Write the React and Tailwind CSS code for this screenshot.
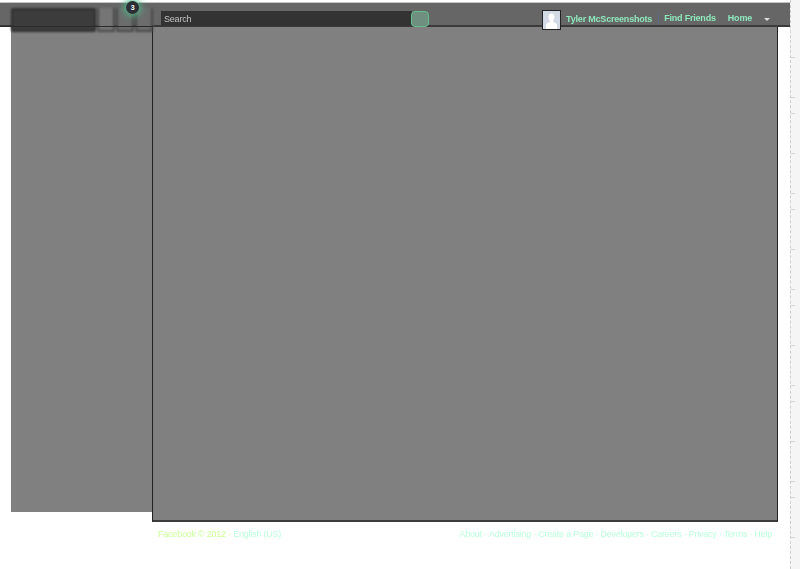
const links = ['About', 'Advertising', 'Create a Page', 'Developers', 'Careers', 'Privacy', 'Terms', 'Help'];
const ticks = [57, 97, 113, 153, 193, 209, 249, 289, 305, 345, 385, 401, 441, 481, 497, 537];

const Header = () => (
  <div className="relative h-[24px] w-[790px] bg-[#666666] border-b-2 border-[#3a3a3a] flex items-center text-[9px] tracking-[-0.2px] font-bold text-[#8ee8bd]">
    <div className="absolute left-[11px] top-[5px] w-[85px] h-[24px] rounded-[2px] bg-[#3c3c3c] border-2 border-[#303030] blur-[0.8px]" />
    <div className="absolute left-[97px] top-[5px] w-[18px] h-[24px] rounded-[2px] bg-[#757575] border-x-2 border-b-2 border-[#484848] blur-[0.8px]" />
    <div className="absolute left-[116px] top-[5px] w-[18px] h-[24px] rounded-[2px] bg-[#6c6c6c] border-x-2 border-b-2 border-[#484848] blur-[0.8px]" />
    <div className="absolute left-[135px] top-[5px] w-[18px] h-[24px] rounded-[2px] bg-[#6c6c6c] border-x-2 border-b-2 border-[#484848] blur-[0.8px]" />
    <div className="absolute left-0 top-[23px] w-[153px] h-px bg-[#2a2a2a]" />
    <div className="absolute left-[126px] top-[-2px] w-[13px] h-[13px] rounded-full bg-[#2b2f33] text-white text-[7px] leading-[13px] text-center shadow-[0_0_7px_2px_#4fb98a]">3</div>

    <div className="absolute left-[161px] top-[8px] w-[251px] h-[15px] pl-[3px] bg-[#333333] text-[#c4c4c4] font-normal leading-[17px] blur-[0.3px]">Search</div>
    <div className="absolute left-[411px] top-[8px] w-[18px] h-[16px] rounded-[4px] bg-[#6f8f80] border border-[#62c08f] blur-[0.6px]" />

    <div className="absolute left-[542px] top-[7px] w-[19px] h-[20px] bg-[#d4d9e6] border border-[#222222] flex items-end justify-center overflow-hidden">
      <svg viewBox="0 0 17 18" className="w-[17px] h-[18px]">
        <path d="M8.5 2.5c2 0 3.1 1.6 3 3.6-.1 1.6-.8 3-1.4 3.6v1.2c1.5.7 3.4 1.4 3.9 2.6V18H3v-4.5c.5-1.2 2.4-1.9 3.9-2.6V9.7c-.6-.6-1.3-2-1.4-3.6-.1-2 1-3.6 3-3.6z" fill="#ffffff" />
      </svg>
    </div>
    <div className="ml-auto mr-[20px] mt-[10px] flex items-center blur-[0.3px]">
      <span className="pr-[6px] border-r border-[#5a6b8a] leading-[12px]">Tyler McScreenshots</span>
      <span className="ml-[5px]">Find Friends</span>
      <span className="ml-[12px]">Home</span>
      <span className="ml-[12px] mt-[1px] w-0 h-0 border-x-[3.5px] border-x-transparent border-t-[3px] border-t-[#dddddd]" />
    </div>
  </div>
);

const Gutter = () => (
  <div className="relative w-[10px] h-full bg-[#f5f5f5] border-l border-dashed border-[#cfcfcf]">
    {ticks.map(t => (
      <div key={t} className="absolute left-0 w-[4px] h-px bg-[#d4d4d4]" style={{ top: t }} />
    ))}
  </div>
);

export default function App() {
  return (
    <div className="w-[800px] h-[569px] overflow-hidden bg-white flex font-['Liberation_Sans',sans-serif]">
      <div className="w-[790px] shrink-0">
        <div className="h-[2px] bg-white" />
        <div className="h-px bg-[#c4c4c4]" />
        <Header />
        <div className="flex items-start pl-[11px] mt-[-1px]">
          <div className="w-[141px] h-[485px] mt-px bg-[#808080]" />
          <div className="w-[626px] h-[496px] bg-[#808080] border border-[#222222] border-b-2 border-b-[#3c3c3c]" />
        </div>
        <div className="flex justify-between pl-[158px] pr-[18px] mt-[6px] text-[9px] tracking-[-0.22px] leading-[12px] blur-[0.2px]">
          <div className="text-[#ccff99]">
            Facebook © 2012 · <span className="text-[#bbffdd]">English (US)</span>
          </div>
          <div className="flex text-[#bbffdd]">
            {links.map((l, i) => (
              <span key={l} className={i ? "before:content-['·'] before:mx-[2.2px]" : ''}>{l}</span>
            ))}
          </div>
        </div>
      </div>
      <Gutter />
    </div>
  );
}
